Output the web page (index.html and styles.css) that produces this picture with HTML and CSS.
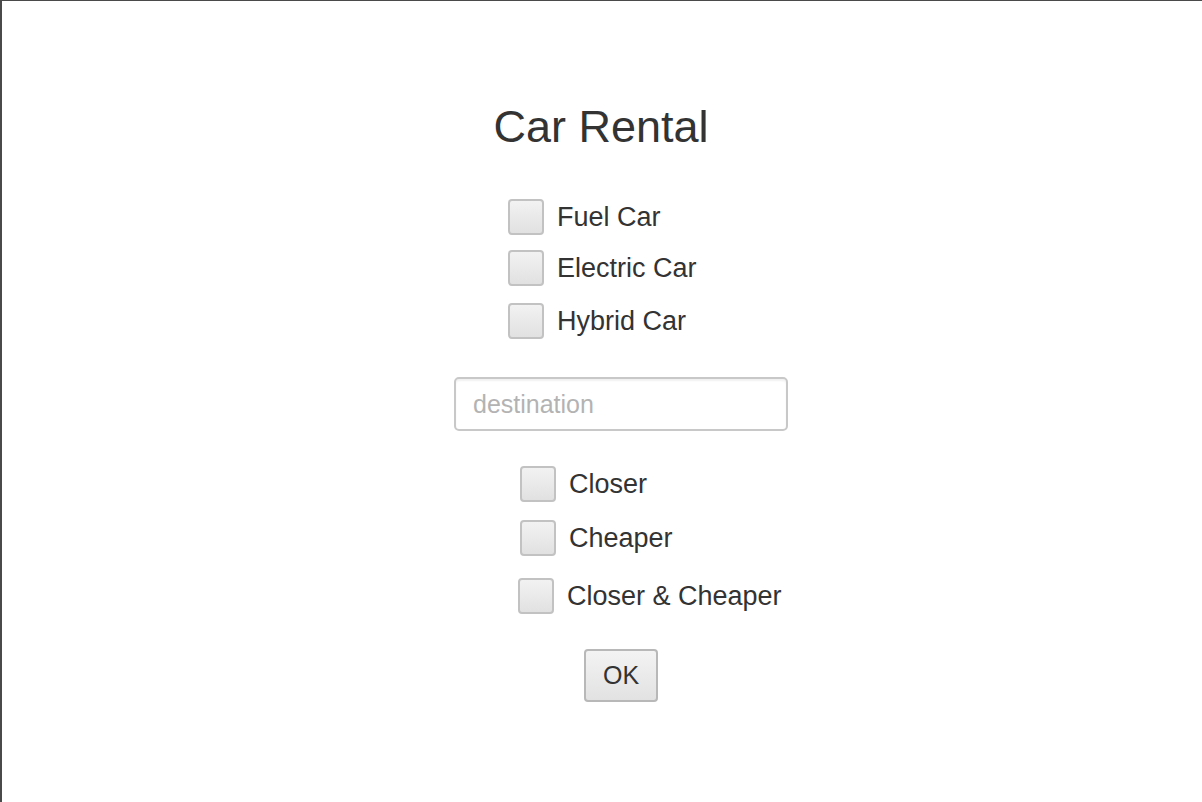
FILE: index.html
```html
<!DOCTYPE html>
<html>
<head>
<meta charset="utf-8">
<link rel="stylesheet" href="styles.css">
</head>
<body>
<div class="window">
  <h1 class="title">Car Rental</h1>
  <div class="group group-types">
    <label class="check"><span class="box"></span><span class="lbl">Fuel Car</span></label>
    <label class="check"><span class="box"></span><span class="lbl">Electric Car</span></label>
    <label class="check"><span class="box"></span><span class="lbl">Hybrid Car</span></label>
  </div>
  <div class="field"><span class="placeholder">destination</span></div>
  <div class="group group-sort">
    <label class="check row-closer"><span class="box"></span><span class="lbl">Closer</span></label>
    <label class="check row-cheaper"><span class="box"></span><span class="lbl">Cheaper</span></label>
    <label class="check row-both"><span class="box"></span><span class="lbl">Closer &amp; Cheaper</span></label>
  </div>
  <button class="ok">OK</button>
</div>
</body>
</html>
```
FILE: styles.css
```css
* { box-sizing: border-box; }
html, body { margin: 0; padding: 0; background: #fff; }
body { font-family: "Liberation Sans", Arial, sans-serif; color: #333; }
.window {
  width: 1202px;
  height: 802px;
  border-top: 1px solid #4a4a4a;
  border-left: 2px solid #4a4a4a;
  display: flex;
  flex-direction: column;
  align-items: center;
  padding-right: 2px;
}
.title {
  margin: 98px 0 0 0;
  font-size: 45px;
  font-weight: normal;
  line-height: 56px;
  color: #333;
}
.group { display: flex; flex-direction: column; align-self: flex-start; }
.group-types { margin: 44px 0 0 506px; gap: 15px; }
.check { display: flex; align-items: center; gap: 13px; height: 36px; }
.box {
  width: 36px; height: 36px;
  border: 2px solid #c2c2c2;
  border-radius: 4px;
  background: linear-gradient(#f2f2f2, #e1e1e1);
  flex: none;
}
.lbl { font-size: 27px; line-height: 36px; color: #333; }
.group-types .check:nth-child(3) { margin-top: 2px; }
.field {
  margin: 38px 0 0 40px;
  width: 334px;
  height: 54px;
  border: 2px solid #c8c8c8;
  border-radius: 5px;
  box-shadow: inset 0 2px 2px rgba(0,0,0,0.06);
  padding-left: 17px;
  display: flex;
  align-items: center;
}
.placeholder { font-size: 25px; color: #b3b3b3; }
.group-sort { margin: 35px 0 0 518px; }
.row-closer { margin-left: 0; }
.row-cheaper { margin-top: 18px; }
.row-both { margin-top: 22px; margin-left: -2px; }
.ok {
  margin: 35px 0 0 40px;
  width: 74px;
  height: 53px;
  border: 2px solid #b8b8b8;
  border-radius: 4px;
  background: linear-gradient(#f3f3f3, #e2e2e2);
  font-family: "Liberation Sans", Arial, sans-serif;
  font-size: 25px;
  color: #333;
  padding: 0;
}
```
